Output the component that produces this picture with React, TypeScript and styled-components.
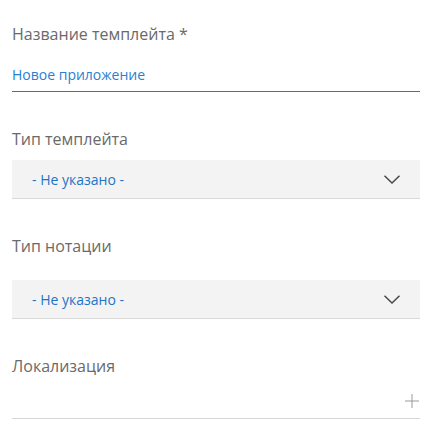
import React from "react";
import styled, { createGlobalStyle } from "styled-components";

const Global = createGlobalStyle`
  html, body { margin: 0; padding: 0; background: #ffffff; }
  body { font-family: "Open Sans", "Noto Sans", sans-serif; }
  * { box-sizing: border-box; }
`;

const Form = styled.div`
  width: 429px;
  padding: 23px 9px 0 12px;
  display: flex;
  flex-direction: column;
  gap: 36px;
`;

const Field = styled.div<{ $gap: number }>`
  display: flex;
  flex-direction: column;
  gap: ${(p) => p.$gap}px;
`;

const Label = styled.div`
  font-size: 16px;
  line-height: 22px;
  color: #6a6a6a;
`;

const TextInput = styled.div`
  font-size: 14px;
  line-height: 20px;
  color: #2a7fcf;
  padding-bottom: 6px;
  border-bottom: 1px solid #1f7fd3;
`;

const Select = styled.div`
  height: 39px;
  background: #f3f3f3;
  border-bottom: 1px solid #d9d9d9;
  display: flex;
  align-items: center;
  justify-content: space-between;
  padding: 0 20px 0 20px;
  font-size: 14px;
  color: #1f74c6;
`;

const ListRow = styled.div`
  height: 38px;
  border-bottom: 1px solid #d6d6d6;
  display: flex;
  align-items: flex-end;
  justify-content: flex-end;
  padding: 0 1px 10px 0;
`;

const Chevron = () => (
  <svg width="16" height="9" viewBox="0 0 16 9" fill="none">
    <path d="M0.5 0.7 L8 8 L15.5 0.7" stroke="#444" strokeWidth="1.4" />
  </svg>
);

const Plus = () => (
  <svg width="14" height="14" viewBox="0 0 14 14" fill="none">
    <path d="M7 0 V14 M0 7 H14" stroke="#9a9a9a" strokeWidth="1" />
  </svg>
);

export default function App() {
  return (
    <>
      <Global />
      <Form>
        <Field $gap={20}>
          <Label>Название темплейта *</Label>
          <TextInput>Новое приложение</TextInput>
        </Field>
        <Field $gap={10}>
          <Label>Тип темплейта</Label>
          <Select>
            <span>- Не указано -</span>
            <Chevron />
          </Select>
        </Field>
        <Field $gap={23}>
          <Label>Тип нотации</Label>
          <Select>
            <span>- Не указано -</span>
            <Chevron />
          </Select>
        </Field>
        <Field $gap={4}>
          <Label>Локализация</Label>
          <ListRow>
            <Plus />
          </ListRow>
        </Field>
      </Form>
    </>
  );
}
